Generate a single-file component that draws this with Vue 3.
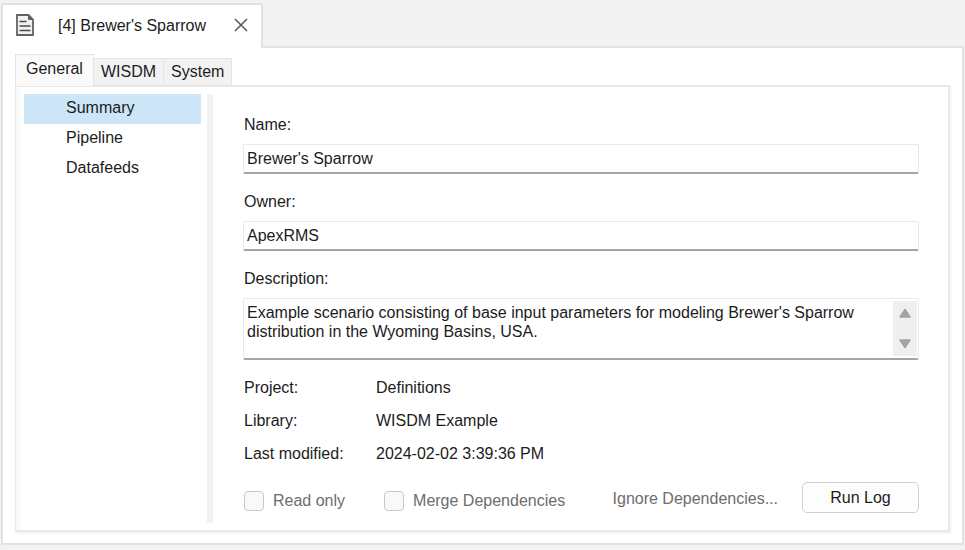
<script setup>
import { ref } from 'vue'

const tabs = ['General', 'WISDM', 'System']
const sections = ['Summary', 'Pipeline', 'Datafeeds']
const activeTab = ref('General')
const activeSection = ref('Summary')

const name = ref("Brewer's Sparrow")
const owner = ref('ApexRMS')
const description = ref(
  "Example scenario consisting of base input parameters for modeling Brewer's Sparrow distribution in the Wyoming Basins, USA."
)
const details = [
  { label: 'Project:', value: 'Definitions' },
  { label: 'Library:', value: 'WISDM Example' },
  { label: 'Last modified:', value: '2024-02-02 3:39:36 PM' }
]

const descriptionBox = ref(null)
function scrollDescription(amount) {
  descriptionBox.value.scrollTop += amount
}
</script>

<template>
  <main class="window">
    <header class="doc-tab">
      <svg class="doc-icon" viewBox="0 0 18 22" aria-hidden="true">
        <path d="M1 1h11.500l4.500 4.500v15.500H1z" fill="#f0f2f1" stroke="#626262" stroke-width="1.800" />
        <path d="M12.500 1v4.500h4.500z" fill="#626262" stroke="#626262" />
        <path d="M3.500 7.500h7M3.500 12h11M3.500 16.500h11" stroke="#4c4c4c" stroke-width="1.500" fill="none" />
      </svg>
      <span class="doc-title">[4] Brewer's Sparrow</span>
      <button class="close" type="button" aria-label="Close">
        <svg viewBox="0 0 14 14" aria-hidden="true">
          <path d="M1 1l12 12M13 1l-12 12" stroke="#555" stroke-width="1.500" fill="none" />
        </svg>
      </button>
    </header>

    <section class="document">
      <nav class="tabs" role="tablist">
        <button
          v-for="tab in tabs"
          :key="tab"
          type="button"
          role="tab"
          class="tab"
          :class="{ active: tab === activeTab }"
          :aria-selected="tab === activeTab"
          @click="activeTab = tab"
        >{{ tab }}</button>
      </nav>

      <div class="page">
        <nav class="sections">
          <a
            v-for="section in sections"
            :key="section"
            href="#"
            class="section"
            :class="{ selected: section === activeSection }"
            @click.prevent="activeSection = section"
          >{{ section }}</a>
        </nav>
        <div class="splitter"></div>

        <form class="form" @submit.prevent>
          <label class="label" for="name">Name:</label>
          <input id="name" v-model="name" class="field" type="text" />

          <label class="label" for="owner">Owner:</label>
          <input id="owner" v-model="owner" class="field" type="text" />

          <label class="label" for="description">Description:</label>
          <div class="field area">
            <textarea id="description" ref="descriptionBox" v-model="description" spellcheck="false"></textarea>
            <div class="scroller">
              <button type="button" aria-label="Scroll up" @click="scrollDescription(-19)">
                <svg viewBox="0 0 12 10" aria-hidden="true"><path d="M6 1.500L11 9H1z" fill="#a3a3a3" stroke="#a3a3a3" stroke-width="1.500" stroke-linejoin="round" /></svg>
              </button>
              <button type="button" aria-label="Scroll down" @click="scrollDescription(19)">
                <svg viewBox="0 0 12 10" aria-hidden="true"><path d="M6 8.500L11 1H1z" fill="#a3a3a3" stroke="#a3a3a3" stroke-width="1.500" stroke-linejoin="round" /></svg>
              </button>
            </div>
          </div>

          <dl class="details">
            <template v-for="item in details" :key="item.label">
              <dt>{{ item.label }}</dt>
              <dd>{{ item.value }}</dd>
            </template>
          </dl>

          <div class="actions">
            <label class="check"><input type="checkbox" disabled />Read only</label>
            <label class="check"><input type="checkbox" disabled />Merge Dependencies</label>
            <button class="ignore" type="button" disabled>Ignore Dependencies...</button>
            <button class="run-log" type="button">Run Log</button>
          </div>
        </form>
      </div>
    </section>
  </main>
</template>

<style>
body {
  margin: 0;
  background: #f2f2f2;
}
</style>

<style scoped>
.window,
.window button,
.window input,
.window textarea {
  font-family: "Liberation Sans", Arial, sans-serif;
  font-size: 16px;
  line-height: 20px;
  color: #1c1c1c;
}
.window * {
  box-sizing: border-box;
}
.window {
  box-sizing: border-box;
  display: flex;
  flex-direction: column;
  min-height: 100vh;
  padding: 3px 1px 5px;
}
button {
  margin: 0;
  padding: 0;
  border: 0;
  background: none;
}
.doc-tab {
  display: flex;
  align-items: center;
  align-self: flex-start;
  height: 45px;
  margin-bottom: -2px;
  padding: 0 13px 3px;
  border: 2px solid #e2e2e2;
  border-bottom: 0;
  background: #fff;
  z-index: 1;
}
.doc-icon {
  width: 18px;
  height: 22px;
}
.doc-title {
  margin: 2px 28px 0 24px;
}
.close {
  display: flex;
}
.close svg {
  width: 14px;
  height: 14px;
}
.document {
  flex: 1;
  display: flex;
  flex-direction: column;
  padding: 6px 12px 11px;
  border: 2px solid #e2e2e2;
  background: #fff;
}
.tabs {
  display: flex;
  align-items: flex-end;
  height: 32px;
  margin-bottom: -1px;
  z-index: 1;
}
.tab {
  height: 28px;
  margin-left: -1px;
  padding: 0 7px;
  border: 1px solid #e4e4e4;
  background: #f2f2f2;
}
.tab.active {
  height: 32px;
  margin-left: 0;
  padding: 0 10px 2px;
  border-bottom-color: #fafafa;
  background: #fafafa;
}
.page {
  flex: 1;
  display: flex;
  padding: 7px 29px 7px 8px;
  border: 2px solid #e9e9e9;
  border-left-width: 1px;
  box-shadow: inset 4px 0 #fafafa, 1px 1px 2px #eee;
  background: #fff;
}
.sections {
  width: 177px;
  flex: none;
}
.section {
  display: block;
  height: 30px;
  padding: 4px 0 6px 42px;
  color: #1c1c1c;
  text-decoration: none;
}
.section.selected {
  background: #cce5f7;
}
.splitter {
  flex: none;
  width: 6px;
  margin-left: 6px;
  background: #f2f2f2;
}
.form {
  flex: 1;
  display: flex;
  flex-direction: column;
  padding: 21px 0 9px 30px;
}
.label {
  display: block;
  height: 29px;
  padding-left: 1px;
}
.field {
  width: 100%;
  height: 30px;
  margin: 0 0 18px;
  padding: 0 3px;
  border: 1px solid #e9e9e9;
  border-bottom: 2px solid #a5a5a5;
  border-radius: 2px;
  outline: 0;
  background: #fff;
}
.field.area {
  display: flex;
  height: 62px;
  padding: 2px 1px 2px 3px;
}
.area textarea {
  flex: 1;
  min-width: 0;
  margin: 0;
  padding: 2px 0 0;
  border: 0;
  outline: 0;
  resize: none;
  overflow: hidden;
  background: none;
  line-height: 19px;
}
.scroller {
  display: flex;
  flex-direction: column;
  justify-content: space-between;
  width: 24px;
  padding: 7px 6px;
  background: #efefef;
}
.scroller button,
.scroller svg {
  display: block;
  width: 12px;
  height: 10px;
}
.details {
  display: grid;
  grid-template-columns: 132px 1fr;
  row-gap: 13px;
  margin: 0 0 18px;
  padding-left: 1px;
}
.details dt,
.details dd {
  margin: 0;
}
.actions {
  display: flex;
  align-items: center;
}
.check {
  display: flex;
  align-items: center;
  gap: 9px;
  margin: 6px 38px 0 1px;
  color: #6d6d6d;
}
.check input {
  appearance: none;
  width: 20px;
  height: 20px;
  margin: 0;
  border: 1px solid #c8c8c8;
  border-radius: 4px;
  background: #f9f9f9;
}
.window .ignore {
  margin-left: auto;
  margin-top: 3px;
  color: #6d6d6d;
}
.run-log {
  width: 117px;
  height: 31px;
  margin-left: 24px;
  border: 1px solid #cfcfcf;
  border-radius: 5px;
  background: #fdfdfd;
}
</style>
